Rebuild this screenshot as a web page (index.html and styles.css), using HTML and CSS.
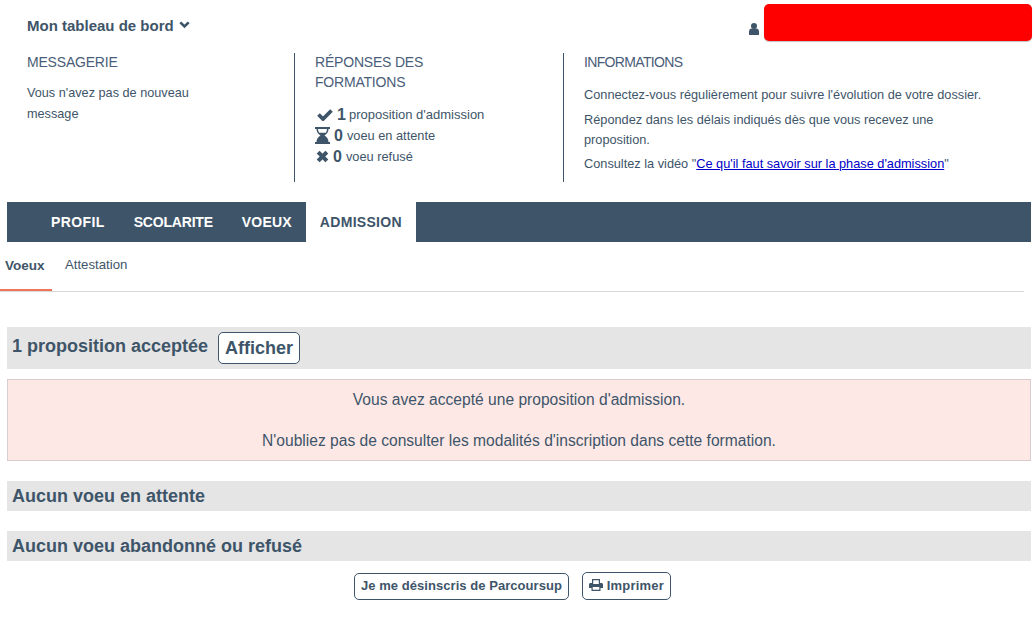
FILE: index.html
```html
<!DOCTYPE html>
<html lang="fr">
<head>
<meta charset="UTF-8">
<meta name="viewport" content="width=device-width, initial-scale=1.0">
<title>Mon tableau de bord</title>
<link rel="stylesheet" href="styles.css">
</head>
<body>
<div class="entete">
    <div class="titre-tableau">
        Mon tableau de bord
        <svg class="chevron" viewBox="0 0 11 8"><path d="M1.300 1.300 5.500 5.500 9.700 1.300" fill="none" stroke="currentColor" stroke-width="2.600"/></svg>
    </div>
    <div class="utilisateur">
        <svg class="icone-user" viewBox="0 0 10 12"><circle cx="5" cy="3" r="3"/><path d="M0 12V8.500C0 7 1 5.500 2.500 5.500h5C9 5.500 10 7 10 8.500V12z"/></svg>
        <div class="masque"></div>
    </div>
</div>
<div class="tableau">
    <div class="colonne col-messagerie">
        <h4>MESSAGERIE</h4>
        <p class="message">Vous n'avez pas de nouveau message</p>
    </div>
    <div class="colonne col-reponses">
        <h4>RÉPONSES DES FORMATIONS</h4>
        <ul class="compteurs">
            <li class="ligne-acceptee">
                <svg class="ic-check" viewBox="0 0 16 13"><path d="M1.500 6.500 6 11l8.500-8.500" fill="none" stroke="currentColor" stroke-width="3.800"/></svg>
                <b>1</b> proposition d'admission
            </li>
            <li>
                <svg class="ic-sablier" viewBox="0 0 15 17"><path fill-rule="evenodd" d="M0 0h15v2H13.500c0 3-1.500 5-4 6.500 2.500 1.500 4 3.500 4 6.500H15v2H0v-2h1.500c0-3 1.500-5 4-6.500C3 7 1.500 5 1.500 2H0zM3 2c0 1.500.4 2.700 1.100 3.700h6.800C11.600 4.700 12 3.500 12 2z"/></svg>
                <b>0</b> voeu en attente
            </li>
            <li>
                <svg class="ic-croix" viewBox="0 0 12 12"><path d="M2 2l8 8M10 2l-8 8" fill="none" stroke="currentColor" stroke-width="3.800"/></svg>
                <b>0</b> voeu refusé
            </li>
        </ul>
    </div>
    <div class="colonne col-infos">
        <h4>INFORMATIONS</h4>
        <p class="info">Connectez-vous régulièrement pour suivre l'évolution de votre dossier.</p>
        <p class="info">Répondez dans les délais indiqués dès que vous recevez une proposition.</p>
        <p class="info">Consultez la vidéo "<a href="#">Ce qu'il faut savoir sur la phase d'admission</a>"</p>
    </div>
</div>
<nav class="menu">
    <a href="#">PROFIL</a>
    <a href="#">SCOLARITE</a>
    <a href="#">VOEUX</a>
    <a href="#" class="actif">ADMISSION</a>
</nav>
<div class="sous-menu">
    <a href="#" class="actif">Voeux</a>
    <a href="#">Attestation</a>
</div>
<div class="contenu">
    <div class="bandeau bandeau-haut">
        <h3>1 proposition acceptée</h3>
        <button type="button" class="btn-afficher">Afficher</button>
    </div>
    <div class="alerte">
        <p>Vous avez accepté une proposition d'admission.</p>
        <p>N'oubliez pas de consulter les modalités d'inscription dans cette formation.</p>
    </div>
    <div class="bandeau"><h3>Aucun voeu en attente</h3></div>
    <div class="bandeau"><h3>Aucun voeu abandonné ou refusé</h3></div>
    <div class="actions">
        <button type="button" class="btn">Je me désinscris de Parcoursup</button>
        <button type="button" class="btn btn-imprimer">
            <svg class="ic-print" viewBox="0 0 14 12"><path d="M3 0h8v4h1.500C13.300 4 14 4.700 14 5.500V9h-2.500v3h-9V9H0V5.500C0 4.700.7 4 1.500 4H3zM4.200 1.200V5h5.600V1.200zM3.700 8v2.800h6.600V8z" fill-rule="evenodd"/></svg>
            Imprimer
        </button>
    </div>
</div>
</body>
</html>
```
FILE: styles.css
```css
* {
    box-sizing: border-box;
}
body {
    margin: 0;
    font-family: 'Liberation Sans', Arial, sans-serif;
    color: #3e5569;
    background: white;
}
.entete {
    display: flex;
    justify-content: space-between;
    height: 53px;
    padding: 4px 3px 0 27px;
}
.titre-tableau {
    font-size: 15px;
    font-weight: bold;
    margin-top: 13px;
    line-height: 17px;
}
.chevron {
    width: 11px;
    height: 8px;
    margin-left: 1px;
    vertical-align: 2px;
}
.utilisateur {
    display: flex;
    align-items: flex-start;
    gap: 5px;
}
.icone-user {
    width: 10px;
    height: 12px;
    margin-top: 19px;
    fill: #3e5569;
}
.masque {
    width: 268px;
    height: 37px;
    background: red;
    border-radius: 5px;
    box-shadow: 0 1px 1px rgba(0,0,0,0.25);
}
.tableau {
    display: flex;
    height: 129px;
    padding-left: 27px;
}
.colonne h4 {
    margin: -1px 0 0;
    font-size: 14px;
    font-weight: normal;
    line-height: 20px;
    color: #4a5d78;
    letter-spacing: -0.2px;
}
.col-messagerie {
    width: 268px;
    border-right: 1px solid #3e5569;
}
.col-reponses {
    width: 269px;
    padding: 0 60px 0 20px;
    border-right: 1px solid #3e5569;
}
.col-infos {
    flex: 1;
    padding: 0 45px 0 20px;
}
.col-infos h4 {
    letter-spacing: -0.65px;
}
.message {
    margin: 11px 0 0;
    width: 180px;
    font-size: 12.700px;
    line-height: 21px;
}
.compteurs {
    list-style: none;
    margin: 12px 0 0;
    padding: 0;
    font-size: 12.800px;
    white-space: nowrap;
}
.compteurs li {
    height: 21px;
    line-height: 21px;
    display: flex;
    align-items: center;
    gap: 4px;
}
.compteurs b {
    font-size: 16px;
}
.compteurs svg {
    fill: currentColor;
}
.ligne-acceptee {
    font-size: 13px;
}
.ligne-acceptee b {
    margin-right: -1px;
}
.ic-check {
    width: 16px;
    height: 13px;
    margin-left: 2px;
}
.ic-sablier {
    width: 15px;
    height: 17px;
}
.ic-croix {
    width: 13px;
    height: 13px;
    margin-left: 1px;
}
.info {
    margin: 0 0 4.500px;
    font-size: 12.750px;
    line-height: 20px;
}
.info:first-of-type {
    margin-top: 13px;
}
.info a {
    color: #0000c8;
}
.menu {
    display: flex;
    height: 40px;
    margin: 20px 4px 0 7px;
    padding-left: 29px;
    background: #3e5569;
}
.menu a {
    padding: 0 14px 0 15px;
    line-height: 40px;
    color: white;
    font-size: 14px;
    font-weight: bold;
    text-decoration: none;
}
.menu a:first-child {
    letter-spacing: 0.4px;
}
.menu a:nth-child(2) {
    letter-spacing: -0.2px;
}
.menu a:nth-child(3) {
    letter-spacing: 0.2px;
}
.menu a.actif {
    padding: 0 14px;
    background: white;
    color: #3e5569;
    letter-spacing: 0.3px;
}
.sous-menu {
    display: flex;
    height: 50px;
    margin-right: 11px;
    border-bottom: 1px solid #d8d8d8;
}
.sous-menu a {
    color: #3e5569;
    font-size: 13.200px;
    text-decoration: none;
    padding: 15px 13px 0;
}
.sous-menu a.actif {
    width: 52px;
    height: 49px;
    padding: 16px 0 0 5px;
    font-weight: bold;
    font-size: 13.500px;
    border-bottom: 2px solid #f0745a;
}
.contenu {
    margin: 35px 4px 0 7px;
}
.bandeau {
    display: flex;
    align-items: center;
    height: 30px;
    margin-bottom: 20px;
    padding-left: 5px;
    background: #e5e5e5;
}
.bandeau h3 {
    margin: 0;
    font-size: 18px;
    line-height: 22px;
}
.bandeau-haut {
    height: 42px;
    margin-bottom: 10px;
    gap: 10px;
}
.bandeau-haut h3 {
    margin-top: -4px;
}
.btn-afficher {
    height: 32px;
    padding: 0 6px;
    background: white;
    border: 1px solid #3e5569;
    border-radius: 5px;
    color: #3e5569;
    font-family: inherit;
    font-size: 18px;
    font-weight: bold;
}
.alerte {
    height: 82px;
    margin-bottom: 20px;
    padding-top: 9px;
    background: #fde8e6;
    border: 1px solid #d8cccc;
    text-align: center;
    font-size: 15.600px;
    line-height: 21px;
}
.alerte p {
    margin: 0 0 20px;
}
.actions {
    display: flex;
    justify-content: center;
    align-items: center;
    gap: 13px;
    margin-top: -9px;
    padding-right: 13px;
}
.btn {
    height: 27px;
    padding: 0 6px 2px;
    background: white;
    border: 1px solid #3e5569;
    border-radius: 5px;
    color: #3e5569;
    font-family: inherit;
    font-size: 13px;
    font-weight: bold;
    letter-spacing: 0.05px;
}
.btn-imprimer {
    height: 28px;
    letter-spacing: 0.2px;
}
.ic-print {
    width: 14px;
    height: 12px;
    fill: currentColor;
    vertical-align: -1px;
}
```
